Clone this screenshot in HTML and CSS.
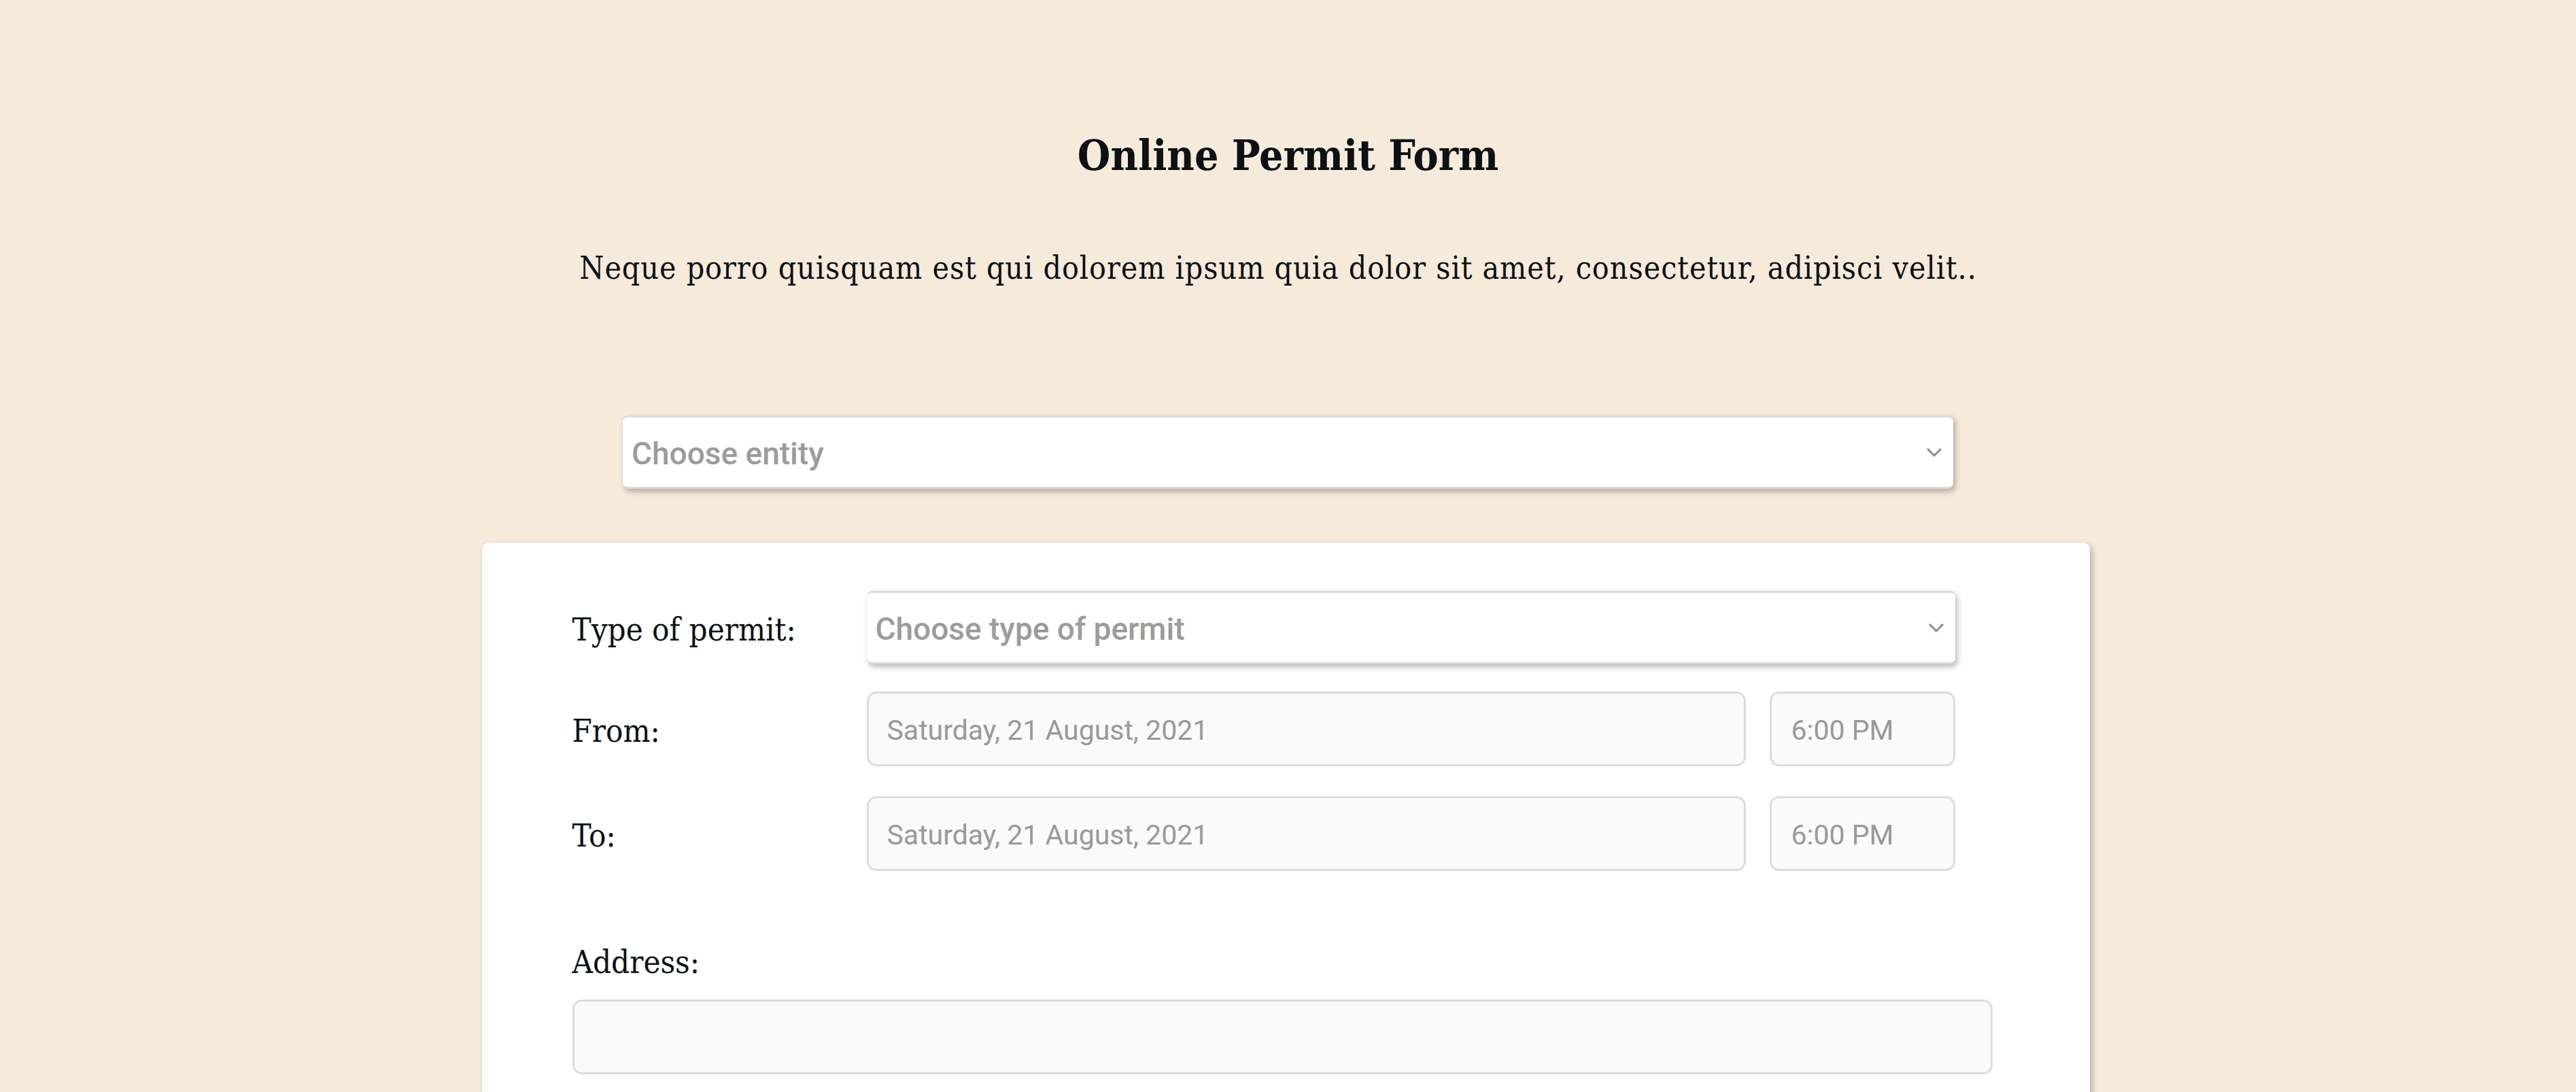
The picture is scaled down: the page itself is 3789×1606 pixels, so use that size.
FILE: index.html
```html
<!DOCTYPE html>
<html lang="en">
<head>
<meta charset="utf-8">
<title>Online Permit Form</title>
<link rel="stylesheet" href="styles.css">
</head>
<body>
<main class="page">
  <header class="intro">
    <h1 class="title">Online Permit Form</h1>
    <p class="lead">Neque porro quisquam est qui dolorem ipsum quia dolor sit amet, consectetur, adipisci velit..</p>
  </header>

  <div class="select select-entity">
    <span class="placeholder">Choose entity</span>
    <svg class="chevron" width="24" height="15" viewBox="0 0 24 15"><path d="M2 2 L12 12 L22 2" fill="none" stroke="#8c8c8c" stroke-width="3"/></svg>
  </div>

  <section class="card">
    <div class="row row-type">
      <label class="label">Type of permit:</label>
      <div class="select select-permit">
        <span class="placeholder">Choose type of permit</span>
        <svg class="chevron" width="24" height="15" viewBox="0 0 24 15"><path d="M2 2 L12 12 L22 2" fill="none" stroke="#8c8c8c" stroke-width="3"/></svg>
      </div>
    </div>
    <div class="row row-from">
      <label class="label">From:</label>
      <div class="field field-date"><span class="value">Saturday, 21 August, 2021</span></div>
      <div class="field field-time"><span class="value">6:00 PM</span></div>
    </div>
    <div class="row row-to">
      <label class="label">To:</label>
      <div class="field field-date"><span class="value">Saturday, 21 August, 2021</span></div>
      <div class="field field-time"><span class="value">6:00 PM</span></div>
    </div>
    <div class="block">
      <label class="label label-block">Address:</label>
      <div class="field field-wide"></div>
    </div>
  </section>
</main>
</body>
</html>
```

FILE: styles.css
```css
html, body {
  margin: 0;
  padding: 0;
}
body {
  background: #f6eada;
  color: #0b1115;
  font-family: "DejaVu Serif", serif;
}
.page {
  padding-top: 189px;
  padding-bottom: 200px;
}
.intro {
  text-align: center;
}
.title {
  margin: 0;
  font-family: "DejaVu Serif Condensed", "DejaVu Serif", serif;
  font-stretch: condensed;
  font-weight: 700;
  font-size: 62px;
  line-height: 80px;
}
.lead {
  margin: 95px 0 0;
  padding-right: 29px;
  font-family: "DejaVu Serif Condensed", "DejaVu Serif", serif;
  font-stretch: condensed;
  font-size: 46px;
  letter-spacing: 1px;
  line-height: 60px;
}
.select {
  box-sizing: border-box;
  height: 108px;
  background: #fff;
  border-top: 3px solid #dcdcd8;
  border-bottom: 3px solid #d8d8d8;
  border-radius: 8px;
  box-shadow: 3px 4px 8px rgba(0, 0, 0, 0.28);
  display: flex;
  align-items: center;
  justify-content: space-between;
  padding: 0 16px 0 13px;
}
.select-entity {
  width: 1957px;
  margin: 187px auto 0;
}
.placeholder {
  font-family: Roboto, "Liberation Sans", sans-serif;
  font-size: 46px;
  font-weight: 500;
  color: #9c9c9c;
  padding-top: 4px;
}
.chevron {
  display: block;
  flex: none;
}
.card {
  box-sizing: border-box;
  width: 2365px;
  min-height: 1000px;
  margin: 79px 0 0 calc(50% - 1186px);
  background: #fff;
  border-radius: 10px;
  box-shadow: 4px 4px 10px rgba(0, 0, 0, 0.22), 0 0 2px rgba(0, 0, 0, 0.08);
  padding: 71px 143px 80px 133px;
}
.row {
  display: flex;
  align-items: center;
  width: 2034px;
}
.row-type { margin-bottom: 40px; }
.row-from { margin-bottom: 44px; }
.label {
  display: block;
  flex: none;
  width: 433px;
  font-family: "DejaVu Serif Condensed", "DejaVu Serif", serif;
  font-stretch: condensed;
  font-size: 47px;
  line-height: 56px;
  color: #0b1115;
}
.row .label {
  padding-top: 6px;
}
.select-permit {
  flex: none;
  width: 1601px;
}
.field {
  box-sizing: border-box;
  height: 110px;
  background: #fafafa;
  border: 3px solid #dcdcdc;
  border-radius: 14px;
  display: flex;
  align-items: center;
}
.field-date {
  width: 1293px;
  padding-left: 27px;
}
.field-time {
  width: 273px;
  margin-left: 35px;
  padding-left: 29px;
}
.value {
  font-family: Roboto, "Liberation Sans", sans-serif;
  font-size: 41px;
  color: #999999;
  padding-top: 4px;
}
.block {
  margin-top: 106px;
}
.label-block {
  width: auto;
  margin-bottom: 27px;
}
.field-wide {
  width: 100%;
}
```
